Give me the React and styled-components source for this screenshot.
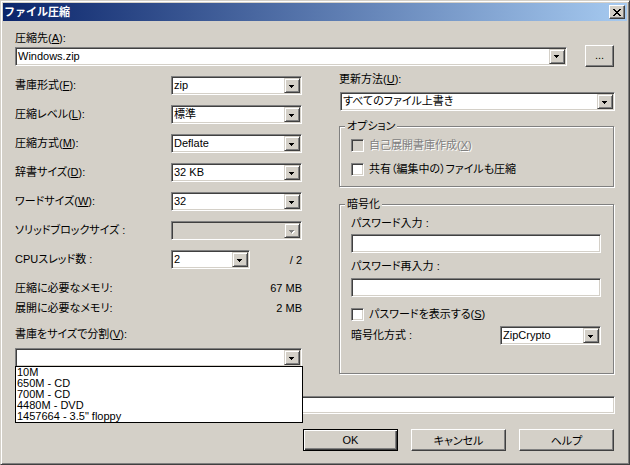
import React from "react";
import styled, { createGlobalStyle, css } from "styled-components";

const GlobalStyle = createGlobalStyle`
  html, body {
    margin: 0;
    padding: 0;
    background: #d4d0c8;
  }
  body {
    font-family: "Liberation Sans", "Noto Sans CJK JP", sans-serif;
    font-size: 11px;
    color: #000;
    font-feature-settings: "palt";
  }
`;

const sunken = css`
  border: 1px solid;
  border-color: #808080 #fff #fff #808080;
  box-shadow: inset 1px 1px 0 #404040, inset -1px -1px 0 #d4d0c8;
`;

const raised = css`
  border: 1px solid;
  border-color: #fff #404040 #404040 #fff;
  box-shadow: inset -1px -1px 0 #808080;
`;

const Window = styled.div`
  box-sizing: border-box;
  width: 630px;
  height: 465px;
  overflow: hidden;
  background: #d4d0c8;
  border: 1px solid;
  border-color: #d4d0c8 #404040 #404040 #d4d0c8;
  box-shadow: inset 1px 1px 0 #fff, inset -1px -1px 0 #808080;
  padding: 2px;
`;

const TitleBar = styled.div`
  height: 18px;
  display: flex;
  align-items: center;
  justify-content: space-between;
  padding: 0 2px 0 1px;
  background: linear-gradient(to right, #0a246a, #a6caf0);
`;

const TitleText = styled.span`
  color: #fff;
  font-weight: bold;
  font-feature-settings: normal;
  line-height: 13px;
`;

const CloseButton = styled.div`
  box-sizing: border-box;
  width: 16px;
  height: 14px;
  display: flex;
  align-items: center;
  justify-content: center;
  background: #d4d0c8;
  ${raised}
`;

const Body = styled.div`
  padding: 0 12px;
`;

const Label = styled.div`
  line-height: 13px;
  white-space: nowrap;
  margin-top: ${(p) => p.$top || 0}px;
  color: ${(p) => (p.$disabled ? "#808080" : "#000")};
  text-shadow: ${(p) => (p.$disabled ? "1px 1px 0 #fff" : "none")};
`;

const PathRow = styled.div`
  display: flex;
  align-items: center;
  gap: 18px;
  height: 22px;
`;

const ComboBox = styled.div`
  position: relative;
  box-sizing: border-box;
  display: flex;
  width: ${(p) => p.$width}px;
  height: 19px;
  margin-top: ${(p) => p.$top || 0}px;
  margin-left: ${(p) => p.$left || 0}px;
  padding: 1px;
  background: ${(p) => (p.$disabled ? "#d4d0c8" : "#fff")};
  ${sunken}
`;

const ComboText = styled.div`
  flex: 1;
  padding-left: 1px;
  line-height: 15px;
  white-space: nowrap;
  overflow: hidden;
`;

const DropButton = styled.div`
  box-sizing: border-box;
  width: 16px;
  height: 15px;
  display: flex;
  align-items: center;
  justify-content: center;
  padding-top: 2px;
  background: #d4d0c8;
  border: 1px solid;
  border-color: #d4d0c8 #404040 #404040 #d4d0c8;
  box-shadow: inset 1px 1px 0 #fff, inset -1px -1px 0 #808080;
`;

const BrowseButton = styled.div`
  box-sizing: border-box;
  width: 29px;
  height: 22px;
  display: flex;
  align-items: center;
  justify-content: center;
  padding-bottom: 3px;
  ${raised}
`;

const Columns = styled.div`
  display: flex;
  gap: 37px;
  margin-top: 6px;
`;

const LeftColumn = styled.div`
  width: 287px;
  padding-top: 3px;
`;

const SettingsGrid = styled.div`
  display: grid;
  grid-template-columns: 156px 131px;
  grid-auto-rows: 19px;
  row-gap: 10px;
  align-items: center;
`;

const CpuControl = styled.div`
  display: flex;
  align-items: center;
  justify-content: space-between;
`;

const InfoRow = styled.div`
  display: flex;
  justify-content: space-between;
  line-height: 13px;
  margin-top: ${(p) => p.$top}px;
`;

const RightColumn = styled.div`
  width: 276px;
`;

const Group = styled.fieldset`
  box-sizing: border-box;
  width: 275px;
  margin: ${(p) => p.$top}px 0 0 0;
  padding: ${(p) => p.$pad};
  border: 1px solid #808080;
  box-shadow: inset 1px 1px 0 #fff, 1px 1px 0 #fff;
  min-width: 0;
`;

const GroupTitle = styled.legend`
  padding: 0 2px;
  margin-left: -6px;
  line-height: 13px;
  background: #d4d0c8;
`;

const CheckRow = styled.div`
  display: flex;
  align-items: center;
  gap: 5px;
  height: 13px;
  line-height: 13px;
  margin-top: ${(p) => p.$top || 0}px;
`;

const CheckBox = styled.div`
  box-sizing: border-box;
  width: 13px;
  height: 13px;
  flex: none;
  background: ${(p) => (p.$disabled ? "#d4d0c8" : "#fff")};
  ${sunken}
`;

const TextBox = styled.div`
  box-sizing: border-box;
  width: ${(p) => (p.$width ? `${p.$width}px` : "100%")};
  height: ${(p) => p.$height}px;
  margin-top: ${(p) => p.$top || 0}px;
  background: #fff;
  ${sunken}
`;

const MethodRow = styled.div`
  display: flex;
  align-items: center;
  justify-content: space-between;
  margin-top: 5px;
`;

const SplitWrap = styled.div`
  position: relative;
  z-index: 2;
  margin-top: 7px;
`;

const DropList = styled.div`
  position: absolute;
  left: 0;
  top: 18px;
  box-sizing: border-box;
  width: 288px;
  border: 1px solid #000;
  background: #fff;
`;

const DropItem = styled.div`
  height: 11px;
  line-height: 11px;
  padding-left: 1px;
  white-space: nowrap;
`;

const ButtonRow = styled.div`
  display: flex;
  justify-content: flex-end;
  gap: 13px;
  margin-top: 15px;
  padding-right: 1px;
`;

const PushButton = styled.div`
  box-sizing: border-box;
  width: 95px;
  height: 22px;
  display: flex;
  align-items: center;
  justify-content: center;
  ${raised}
  ${(p) =>
    p.$default &&
    css`
      border: 1px solid #000;
      box-shadow: inset 1px 1px 0 #fff, inset -1px -1px 0 #404040,
        inset -2px -2px 0 #808080;
    `}
`;

const Arrow = ({ disabled }) => (
  <svg width="6" height="4" viewBox="0 0 6 4" shapeRendering="crispEdges">
    {disabled && <path d="M1 1h5v1h-1v1h-1v1h-1v-1h-1v-1h-1z" fill="#fff" />}
    <path d="M0 0h5v1h-1v1h-1v1h-1v-1h-1v-1h-1z" fill={disabled ? "#808080" : "#000"} />
  </svg>
);

const CloseGlyph = () => (
  <svg width="8" height="7" viewBox="0 0 8 7" shapeRendering="crispEdges">
    <path
      d="M0 0h2v1h-2zM6 0h2v1h-2zM1 1h2v1h-2zM5 1h2v1h-2zM2 2h4v1h-4zM3 3h2v1h-2zM2 4h4v1h-4zM1 5h2v1h-2zM5 5h2v1h-2zM0 6h2v1h-2zM6 6h2v1h-2z"
      fill="#000"
    />
  </svg>
);

const Combo = ({ value, width, top, left, disabled }) => (
  <ComboBox $width={width} $top={top} $left={left} $disabled={disabled}>
    <ComboText>{value}</ComboText>
    <DropButton>
      <Arrow disabled={disabled} />
    </DropButton>
  </ComboBox>
);

const settings = [
  { label: <>書庫形式(<u>F</u>):</>, value: "zip" },
  { label: <>圧縮レベル(<u>L</u>):</>, value: "標準" },
  { label: <>圧縮方式(<u>M</u>):</>, value: "Deflate" },
  { label: <>辞書サイズ(<u>D</u>):</>, value: "32 KB" },
  { label: <>ワードサイズ(<u>W</u>):</>, value: "32" },
  { label: <>ソリッドブロックサイズ :</>, value: "", disabled: true },
];

const splitSizes = ["10M", "650M - CD", "700M - CD", "4480M - DVD", "1457664 - 3.5\" floppy"];

export default function App() {
  return (
    <>
      <GlobalStyle />
      <Window>
        <TitleBar>
          <TitleText>ファイル圧縮</TitleText>
          <CloseButton>
            <CloseGlyph />
          </CloseButton>
        </TitleBar>
        <Body>
          <Label $top={11}>圧縮先(<u>A</u>):</Label>
          <PathRow>
            <Combo value="Windows.zip" width={552} />
            <BrowseButton>...</BrowseButton>
          </PathRow>

          <Columns>
            <LeftColumn>
              <SettingsGrid>
                {settings.map((s, i) => (
                  <React.Fragment key={i}>
                    <Label>{s.label}</Label>
                    <Combo value={s.value} width={131} disabled={s.disabled} />
                  </React.Fragment>
                ))}
                <Label>CPUスレッド数 :</Label>
                <CpuControl>
                  <Combo value="2" width={79} />
                  <span>/ 2</span>
                </CpuControl>
              </SettingsGrid>
              <InfoRow $top={13}>
                <span>圧縮に必要なメモリ:</span>
                <span>67 MB</span>
              </InfoRow>
              <InfoRow $top={7}>
                <span>展開に必要なメモリ:</span>
                <span>2 MB</span>
              </InfoRow>
              <Label $top={13}>書庫をサイズで分割(<u>V</u>):</Label>
              <SplitWrap>
                <Combo value="" width={287} />
                <DropList>
                  {splitSizes.map((s) => (
                    <DropItem key={s}>{s}</DropItem>
                  ))}
                </DropList>
              </SplitWrap>
            </LeftColumn>

            <RightColumn>
              <Label>更新方法(<u>U</u>):</Label>
              <Combo value="すべてのファイル上書き" width={275} top={6} left={1} />
              <Group $top={9} $pad="6px 11px 10px 11px">
                <GroupTitle>オプション</GroupTitle>
                <CheckRow>
                  <CheckBox $disabled />
                  <Label $disabled>自己展開書庫作成(<u>X</u>)</Label>
                </CheckRow>
                <CheckRow $top={11}>
                  <CheckBox />
                  <Label>共有（編集中の）ファイルも圧縮</Label>
                </CheckRow>
              </Group>
              <Group $top={11} $pad="6px 12px 28px 11px">
                <GroupTitle>暗号化</GroupTitle>
                <Label>パスワード入力 :</Label>
                <TextBox $height={19} $top={4} />
                <Label $top={7}>パスワード再入力 :</Label>
                <TextBox $height={19} $top={5} />
                <CheckRow $top={11}>
                  <CheckBox />
                  <Label>パスワードを表示する(<u>S</u>)</Label>
                </CheckRow>
                <MethodRow>
                  <Label>暗号化方式 :</Label>
                  <Combo value="ZipCrypto" width={101} />
                </MethodRow>
              </Group>
            </RightColumn>
          </Columns>

          {/* parameters box; its caption sits under the open split list */}
          <TextBox $height={18} $top={22} />

          <ButtonRow>
            <PushButton $default>OK</PushButton>
            <PushButton>キャンセル</PushButton>
            <PushButton>ヘルプ</PushButton>
          </ButtonRow>
        </Body>
      </Window>
    </>
  );
}
